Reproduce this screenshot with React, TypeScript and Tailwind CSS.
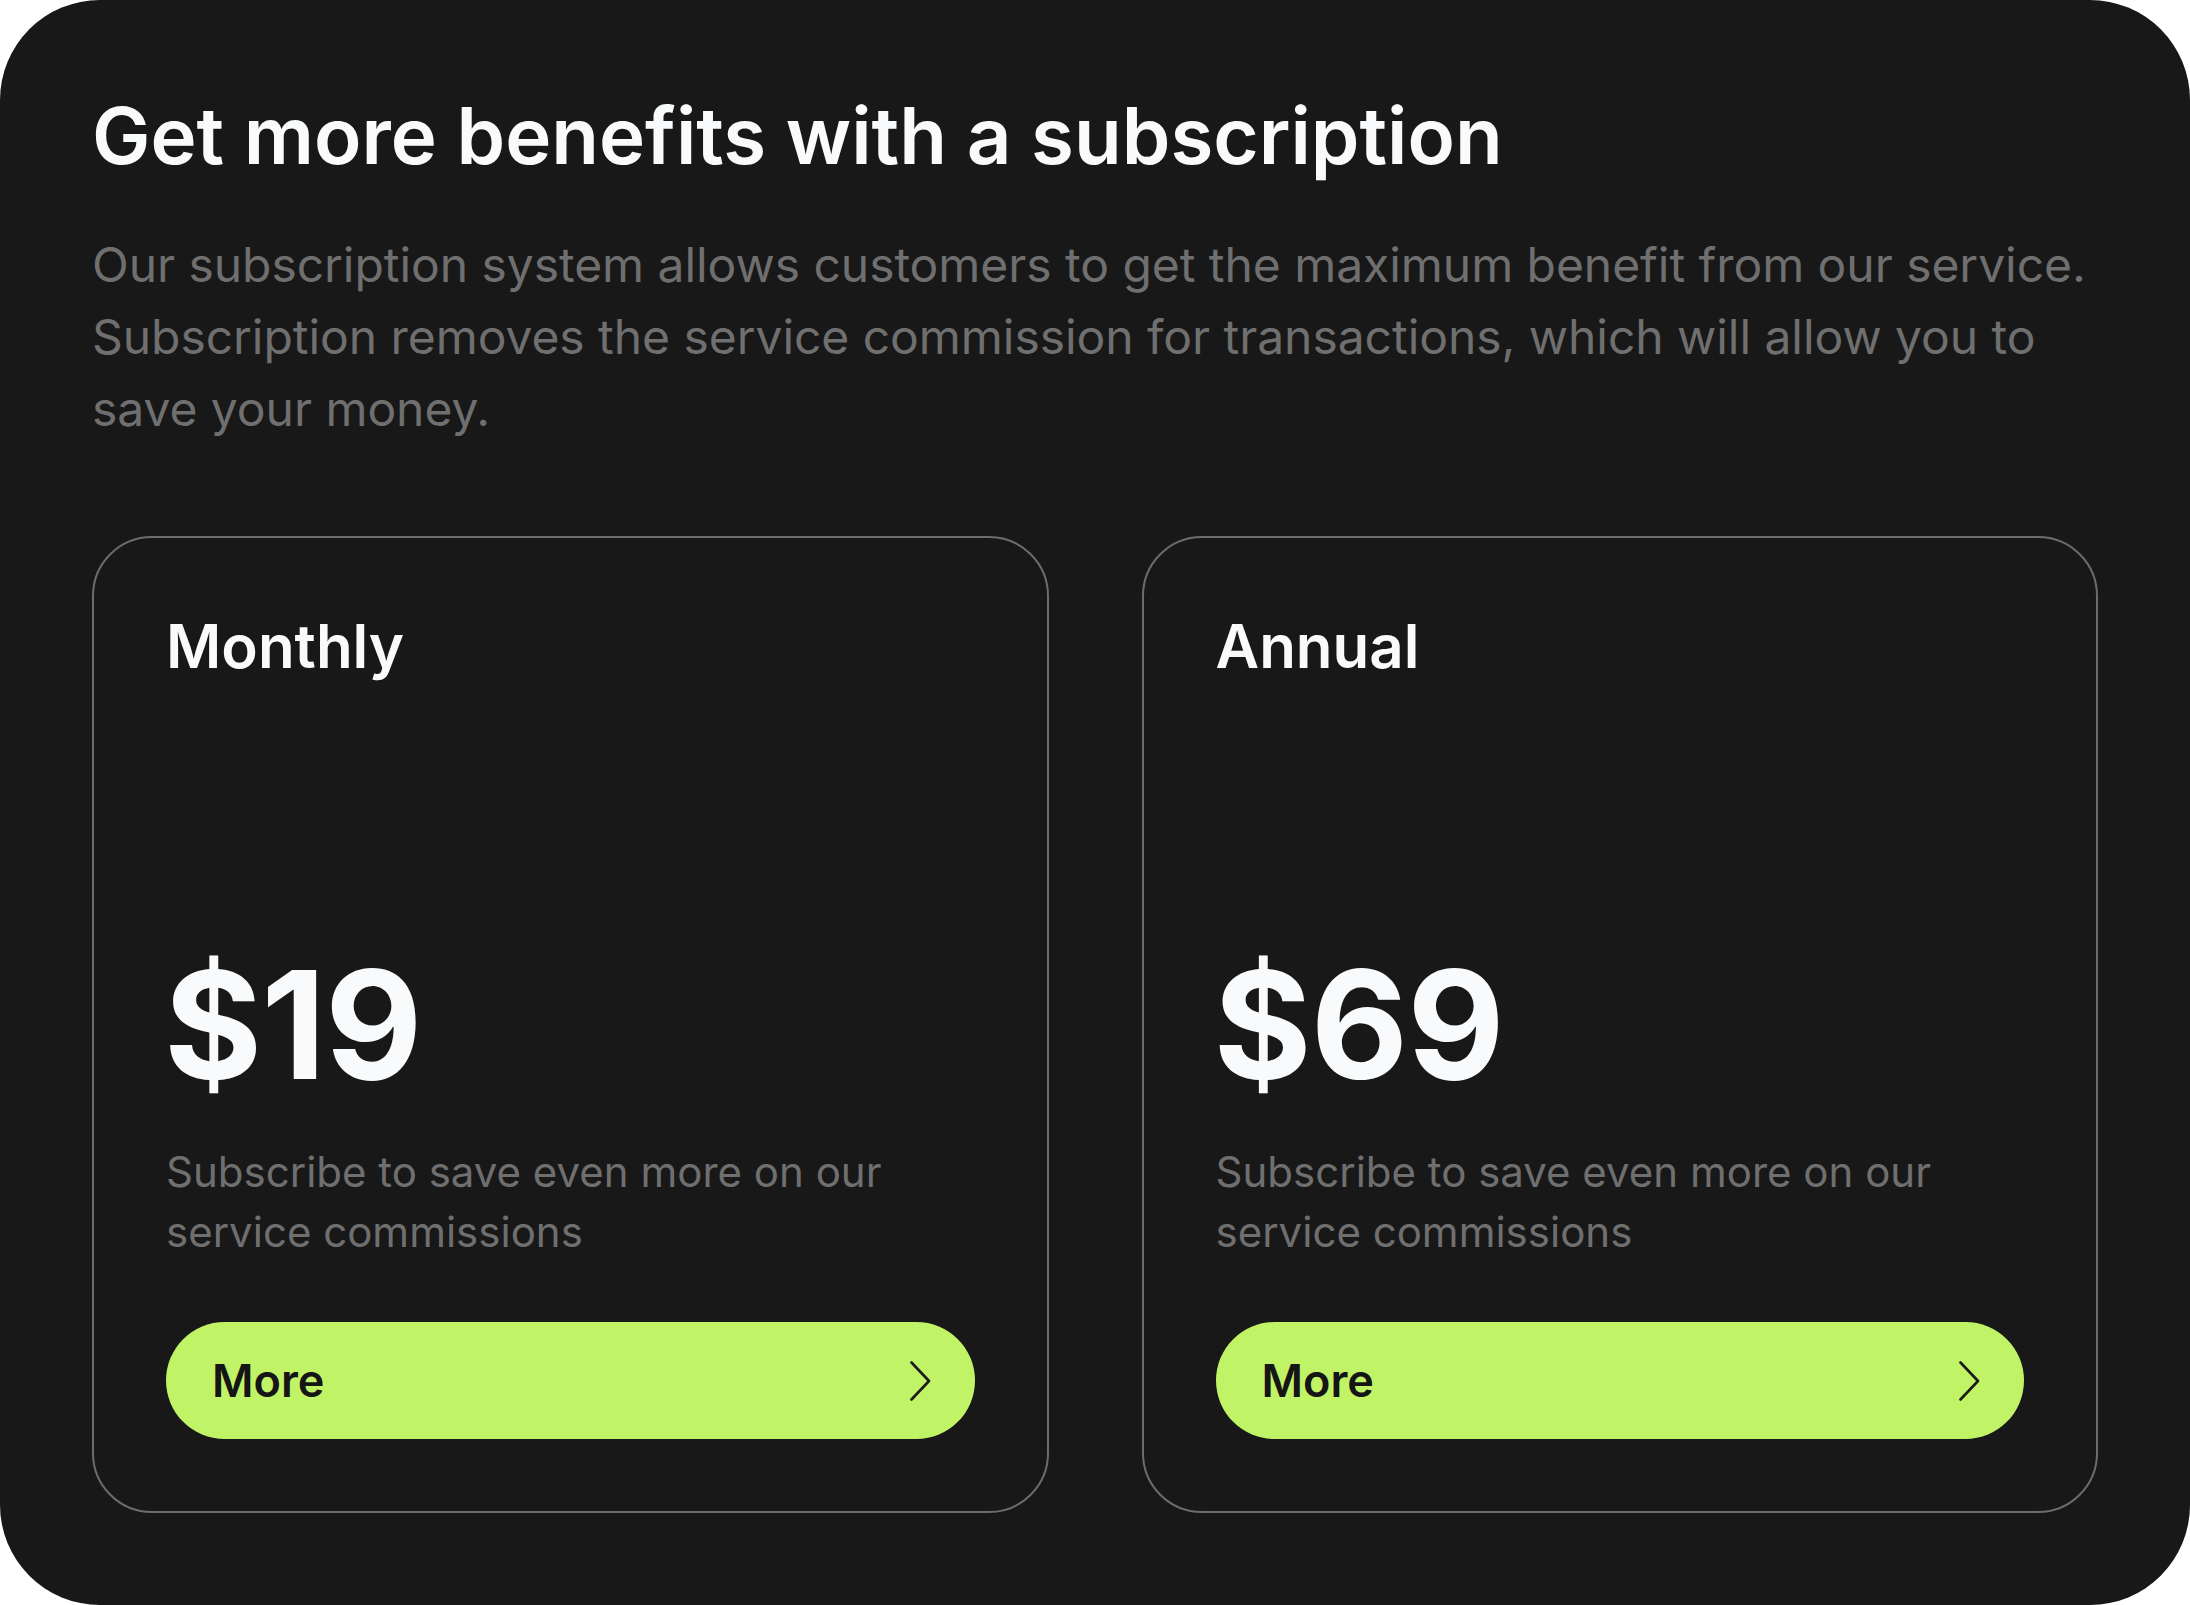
const plans = [
  { name: "Monthly", price: "$19" },
  { name: "Annual", price: "$69" },
];

function Chevron() {
  return (
    <svg width="22" height="40" viewBox="0 0 22 40" fill="none" className="shrink-0">
      <path d="M2.5 1.5 20 20 2.5 38.5" stroke="#1b1b1b" strokeWidth="2.6" strokeLinecap="round" strokeLinejoin="round" />
    </svg>
  );
}

function PlanCard({ name, price }: { name: string; price: string }) {
  return (
    <div className="flex flex-col rounded-[60px] border-2 border-[#6c6c6c] p-[72px]">
      <h2 className="text-[60px] font-semibold leading-[72px] text-[#f9fafb]">{name}</h2>

      {/* price block sits at the bottom */}
      <div className="mt-auto -ml-[2px] text-[150px] font-bold leading-[147px] tracking-[-1px] text-[#f9fafb]">{price}</div>
      <p className="mt-[44px] text-[42px] leading-[60px] text-[#6f6f6f]">
        Subscribe to save even more on our service commissions
      </p>

      <button className="mt-[60px] flex h-[117px] w-full items-center justify-between rounded-full bg-[#c1f367] pl-[46px] pr-[44px]">
        <span className="text-[45px] font-semibold text-[#151515]">More</span>
        <Chevron />
      </button>
    </div>
  );
}

export default function App() {
  return (
    <div className="bg-white" style={{ fontFamily: "Inter, 'Noto Sans', sans-serif" }}>
      <div className="flex h-[1605px] flex-col rounded-[100px] bg-[#181818] px-[92px] pt-[89px] pb-[92px]">
        <h1 className="text-[78px] font-semibold leading-[94px] text-[#f9fafb]">
          Get more benefits with a subscription
        </h1>
        <p className="mt-[46px] text-[48px] leading-[72px] tracking-[-0.05px] text-[#6f6f6f]">
          Our subscription system allows customers to get the maximum benefit from our service. Subscription removes the
          service commission for transactions, which will allow you to save your money.
        </p>

        <div className="mt-[91px] grid flex-1 grid-cols-2 gap-[93px]">
          {plans.map((p) => (
            <PlanCard key={p.name} name={p.name} price={p.price} />
          ))}
        </div>
      </div>
    </div>
  );
}
